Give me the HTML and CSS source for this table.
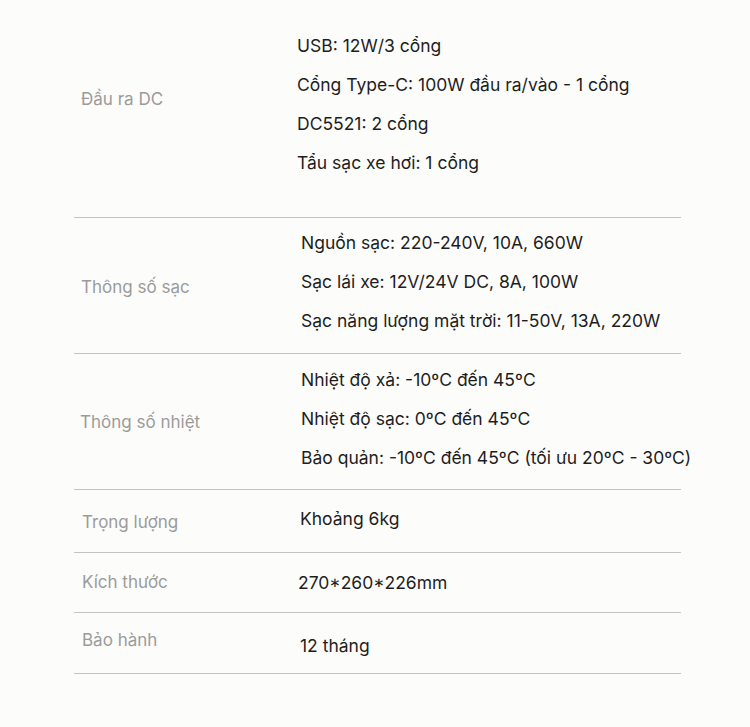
FILE: index.html
```html
<!DOCTYPE html>
<html lang="vi">
<head>
<meta charset="utf-8">
<title>Thông số kỹ thuật</title>
<link rel="stylesheet" href="styles.css">
</head>
<body>
<div class="specs">
  <div class="row r1">
    <div class="label">Đầu ra DC</div>
    <div class="value">
      <p>USB: 12W/3 cổng</p>
      <p>Cổng Type-C: 100W đầu ra/vào - 1 cổng</p>
      <p>DC5521: 2 cổng</p>
      <p>Tẩu sạc xe hơi: 1 cổng</p>
    </div>
  </div>
  <div class="row r2">
    <div class="label">Thông số sạc</div>
    <div class="value">
      <p>Nguồn sạc: 220-240V, 10A, 660W</p>
      <p>Sạc lái xe: 12V/24V DC, 8A, 100W</p>
      <p>Sạc năng lượng mặt trời: 11-50V, 13A, 220W</p>
    </div>
  </div>
  <div class="row r3">
    <div class="label">Thông số nhiệt</div>
    <div class="value">
      <p>Nhiệt độ xả: -10ºC đến 45ºC</p>
      <p>Nhiệt độ sạc: 0ºC đến 45ºC</p>
      <p>Bảo quản: -10ºC đến 45ºC (tối ưu 20ºC - 30ºC)</p>
    </div>
  </div>
  <div class="row r4">
    <div class="label">Trọng lượng</div>
    <div class="value"><p>Khoảng 6kg</p></div>
  </div>
  <div class="row r5">
    <div class="label">Kích thước</div>
    <div class="value"><p>270*260*226mm</p></div>
  </div>
  <div class="row r6">
    <div class="label">Bảo hành</div>
    <div class="value"><p>12 tháng</p></div>
  </div>
</div>
</body>
</html>
```
FILE: styles.css
```css
html, body {
  margin: 0;
  padding: 0;
  background: #fcfcfa;
}
body {
  font-family: Inter, "Noto Sans", sans-serif;
  font-size: 17.5px;
  color: #1e1e1e;
}
.specs {
  width: 607px;
  margin-left: 74px;
}
.row {
  display: grid;
  grid-template-columns: 223px 1fr;
  border-bottom: 1px solid #c3c3c3;
}
.label {
  align-self: center;
  padding-left: 7px;
  color: #9b9b9b;
  font-size: 17px;
  line-height: 24px;
}
.value p {
  margin: 0;
  line-height: 39px;
  white-space: nowrap;
}
.r1 { padding: 26px 0 35px; }
.r1 .label { margin-bottom: 10px; }
.r2 { padding: 5px 0 13px; }
.r2 .label { margin-top: 11px; }
.r2 .value { padding-left: 4px; }
.r3 { padding: 6px 0 12px; }
.r3 .label { margin-top: 7px; padding-left: 6px; }
.r3 .value { padding-left: 4px; }
.r4 { padding: 9px 0 14px; }
.r4 .label { margin-top: 7px; padding-left: 8px; }
.r4 .value { padding-left: 3px; }
.r5 { padding: 10px 0 10px; }
.r5 .label { margin-bottom: 2px; padding-left: 8px; }
.r5 .value { padding-left: 1px; }
.r6 { padding: 13px 0 8px; }
.r6 .label { margin-bottom: 11px; padding-left: 8px; }
.r6 .value { padding-left: 3px; }
```
